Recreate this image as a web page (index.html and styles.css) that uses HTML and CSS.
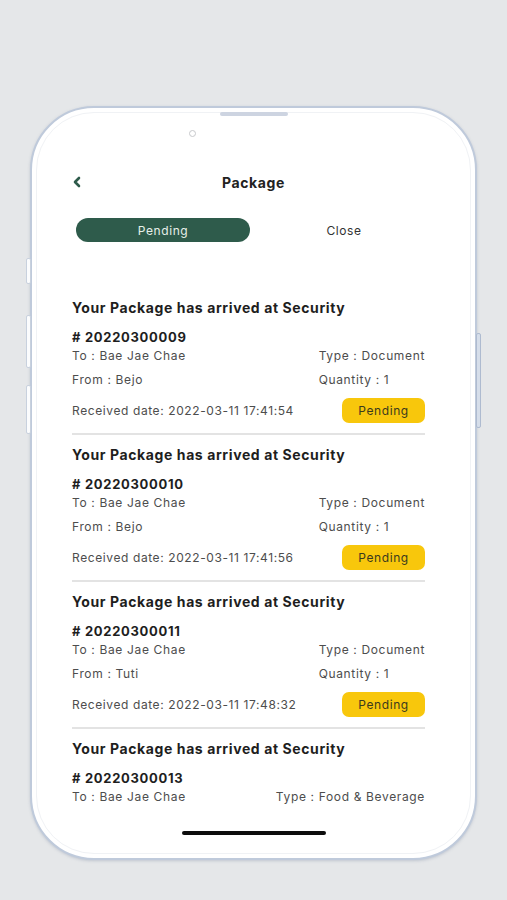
FILE: index.html
```html
<!DOCTYPE html>
<html lang="en">
<head>
<meta charset="utf-8">
<title>Package</title>
<link rel="stylesheet" href="styles.css">
</head>
<body>
<div class="stage">
  <div class="phone">
    <span class="btn btn-l1"></span>
    <span class="btn btn-l2"></span>
    <span class="btn btn-l3"></span>
    <span class="btn btn-r1"></span>
    <span class="speaker"></span>
    <span class="camera"></span>
    <div class="screen">
      <header class="header">
        <svg class="back" width="10" height="12" viewBox="0 0 10 12"><polyline points="7,2 3,6 7,10" fill="none" stroke="#2e5b4b" stroke-width="2.6" stroke-linecap="round" stroke-linejoin="round"/></svg>
        <h1 class="title">Package</h1>
      </header>
      <nav class="tabs">
        <div class="tab active">Pending</div>
        <div class="tab">Close</div>
      </nav>
      <div class="list">
        <article class="card">
          <h2 class="card-title">Your Package has arrived at Security</h2>
          <div class="code"># 20220300009</div>
          <div class="info">
            <div class="col"><div>To : Bae Jae Chae</div><div>From : Bejo</div></div>
            <div class="col"><div>Type : Document</div><div>Quantity : 1</div></div>
          </div>
          <div class="foot"><span>Received date: 2022-03-11 17:41:54</span><span class="badge">Pending</span></div>
        </article>
        <article class="card">
          <h2 class="card-title">Your Package has arrived at Security</h2>
          <div class="code"># 20220300010</div>
          <div class="info">
            <div class="col"><div>To : Bae Jae Chae</div><div>From : Bejo</div></div>
            <div class="col"><div>Type : Document</div><div>Quantity : 1</div></div>
          </div>
          <div class="foot"><span>Received date: 2022-03-11 17:41:56</span><span class="badge">Pending</span></div>
        </article>
        <article class="card">
          <h2 class="card-title">Your Package has arrived at Security</h2>
          <div class="code"># 20220300011</div>
          <div class="info">
            <div class="col"><div>To : Bae Jae Chae</div><div>From : Tuti</div></div>
            <div class="col"><div>Type : Document</div><div>Quantity : 1</div></div>
          </div>
          <div class="foot"><span>Received date: 2022-03-11 17:48:32</span><span class="badge">Pending</span></div>
        </article>
        <article class="card partial">
          <h2 class="card-title">Your Package has arrived at Security</h2>
          <div class="code"># 20220300013</div>
          <div class="info">
            <div class="col"><div>To : Bae Jae Chae</div></div>
            <div class="col"><div>Type : Food &amp; Beverage</div></div>
          </div>
        </article>
      </div>
      <div class="home-bar"></div>
    </div>
  </div>
</div>
</body>
</html>
```
FILE: styles.css
```css
* { box-sizing: border-box; }
html, body { margin: 0; padding: 0; }
body {
  background: #e5e7e9;
  font-family: Inter, "Noto Sans", sans-serif;
  color: #1e1e1e;
  width: 507px;
  height: 900px;
  overflow: hidden;
}
.stage {
  display: flex;
  justify-content: center;
  padding-top: 106px;
}
.phone {
  position: relative;
  width: 447px;
  height: 754px;
  background: #fff;
  border: 2px solid #bfcadb;
  border-radius: 64px;
  box-shadow: 0 1px 3px rgba(120,135,160,0.35);
  padding: 4px;
}
.btn {
  position: absolute;
  width: 5px;
  background: #fbfcfd;
  border: 1px solid #c8d1de;
  border-radius: 2px;
}
.btn-l1 { left: -6px; top: 150px; height: 26px; }
.btn-l2 { left: -6px; top: 207px; height: 53px; }
.btn-l3 { left: -6px; top: 277px; height: 49px; }
.btn-r1 { right: -6px; top: 225px; height: 95px; background: #d6deea; border-color: #aebbd0; }
.speaker {
  position: absolute;
  left: 188px;
  top: 4px;
  width: 68px;
  height: 4px;
  border-radius: 2px;
  background: #cdd4e1;
}
.camera {
  position: absolute;
  left: 157px;
  top: 22px;
  width: 7px;
  height: 7px;
  border-radius: 50%;
  border: 1.5px solid #c7c9cc;
}
.screen {
  height: 100%;
  border: 1px solid #f0f2f5;
  border-radius: 58px;
  padding-top: 57px;
  display: flex;
  flex-direction: column;
}
.header {
  position: relative;
  height: 24px;
  display: flex;
  align-items: center;
  justify-content: center;
}
.back {
  position: absolute;
  left: 35px;
  top: 6px;
}
.title {
  margin: 0;
  font-size: 14px;
  font-weight: 700;
  color: #222;
  letter-spacing: 0.6px;
}
.tabs {
  display: grid;
  grid-template-columns: 1fr 1fr;
  margin: 24px 39px 0 39px;
  column-gap: 7px;
}
.tab {
  height: 24px;
  border-radius: 12px;
  display: flex;
  align-items: center;
  justify-content: center;
  font-size: 12px;
  letter-spacing: 0.6px;
  color: #333;
}
.tab.active {
  background: #2e5b4b;
  color: #e6efe9;
}
.list {
  margin-top: 56px;
  padding: 0 45px 0 35px;
  height: 512px;
  overflow: hidden;
}
.card {
  padding: 10px 0 10px;
  border-bottom: 2px solid #e3e3e3;
}
.card:first-child { padding-top: 0; }
.card.partial { border-bottom: 0; }
.card-title {
  margin: 0;
  font-size: 14px;
  line-height: 20px;
  font-weight: 700;
  letter-spacing: 0.6px;
  color: #1e1e1e;
}
.code {
  margin-top: 10px;
  font-size: 13px;
  line-height: 18px;
  font-weight: 700;
  letter-spacing: 0.7px;
  color: #1e1e1e;
}
.info {
  margin-top: 1px;
  display: flex;
  justify-content: space-between;
  font-size: 12px;
  line-height: 18px;
  letter-spacing: 0.65px;
  color: #4d4d4d;
}
.col { display: flex; flex-direction: column; gap: 6px; }
.foot {
  margin-top: 9px;
  display: flex;
  justify-content: space-between;
  align-items: center;
  font-size: 12px;
  letter-spacing: 0.6px;
  color: #4d4d4d;
}
.badge {
  width: 83px;
  height: 25px;
  border-radius: 7px;
  background: #f8c70c;
  color: #3b3a1e;
  font-size: 12px;
  display: flex;
  align-items: center;
  justify-content: center;
}
.home-bar {
  margin: 21px auto 0;
  width: 144px;
  height: 4px;
  border-radius: 2px;
  background: #0d0d0d;
}
```
